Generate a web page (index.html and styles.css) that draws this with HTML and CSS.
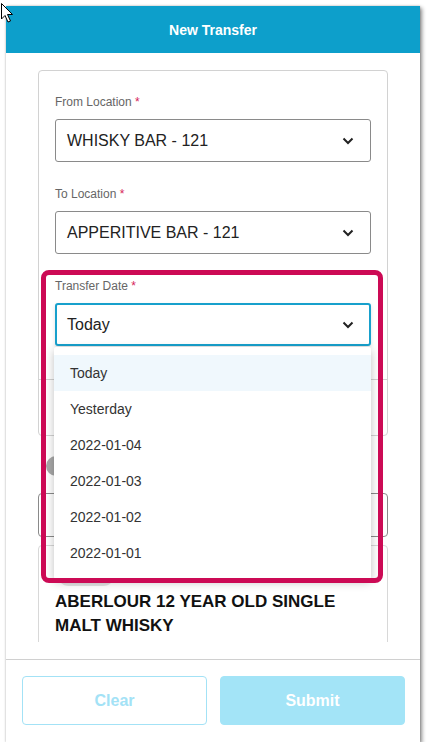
FILE: index.html
```html
<!DOCTYPE html>
<html lang="en">
<head>
    <meta charset="UTF-8">
    <meta name="viewport" content="width=device-width, initial-scale=1.0">
    <title>New Transfer</title>
    <link rel="stylesheet" href="styles.css">
</head>
<body>
    <div class="modal">
        <header class="modal-header">New Transfer</header>

        <div class="modal-body">
            <div class="form-card">
                <div class="card-fields">
                    <div class="field">
                        <label>From Location <span class="req">*</span></label>
                        <div class="select">
                            <span>WHISKY BAR - 121</span>
                            <svg class="chevron" width="12" height="8" viewBox="0 0 12 8"><path d="M1.5 1.5 L6 6 L10.5 1.5" fill="none" stroke="#222" stroke-width="2"/></svg>
                        </div>
                    </div>

                    <div class="field">
                        <label>To Location <span class="req">*</span></label>
                        <div class="select">
                            <span>APPERITIVE BAR - 121</span>
                            <svg class="chevron" width="12" height="8" viewBox="0 0 12 8"><path d="M1.5 1.5 L6 6 L10.5 1.5" fill="none" stroke="#222" stroke-width="2"/></svg>
                        </div>
                    </div>

                    <div class="field">
                        <label>Transfer Date <span class="req">*</span></label>
                        <div class="select-wrap">
                            <div class="select focused">
                                <span>Today</span>
                                <svg class="chevron" width="12" height="8" viewBox="0 0 12 8"><path d="M1.5 1.5 L6 6 L10.5 1.5" fill="none" stroke="#222" stroke-width="2"/></svg>
                            </div>
                            <ul class="dropdown">
                                <li class="active">Today</li>
                                <li>Yesterday</li>
                                <li>2022-01-04</li>
                                <li>2022-01-03</li>
                                <li>2022-01-02</li>
                                <li>2022-01-01</li>
                            </ul>
                        </div>
                    </div>
                </div>
                <div class="card-extra"></div>
            </div>

            <div class="toggle-row">
                <span class="toggle-knob"></span>
            </div>

            <div class="search-box"></div>

            <div class="product-card">
                <span class="badge"></span>
                <h3>ABERLOUR 12 YEAR OLD SINGLE MALT WHISKY</h3>
            </div>
        </div>

        <footer class="modal-footer">
            <button class="btn btn-outline">Clear</button>
            <button class="btn btn-solid">Submit</button>
        </footer>

        <div class="highlight"></div>
    </div>

    <svg class="cursor" width="14" height="22" viewBox="0 0 14 22">
        <path d="M1.5 1.5 L1.5 17 L5 13.5 L8 20 L10.5 19 L7.5 12.5 L12.5 12.5 Z" fill="#fff" stroke="#000" stroke-width="1"/>
    </svg>
</body>
</html>
```

FILE: styles.css
```css
body {
    margin: 0;
    background-color: #fff;
    font-family: "Liberation Sans", Arial, sans-serif;
}
.modal {
    position: relative;
    width: 414px;
    height: 736px;
    margin: 6px 0 0 6px;
    display: flex;
    flex-direction: column;
    background-color: #fff;
    box-shadow: 2px 2px 4px rgba(0, 0, 0, 0.45), 0 0 2px rgba(0, 0, 0, 0.2);
}
.modal-header {
    height: 47px;
    flex-shrink: 0;
    display: flex;
    align-items: center;
    justify-content: center;
    background-color: #0d9fcb;
    color: #fff;
    font-weight: bold;
    font-size: 14px;
}
.modal-body {
    height: 572px;
    padding: 17px 32px 0;
    overflow: hidden;
    flex-shrink: 0;
}
.form-card {
    border: 1px solid #d2d2d2;
    border-radius: 4px;
}
.card-fields {
    padding: 23px 16px 33px;
    display: flex;
    flex-direction: column;
    gap: 24px;
}
.field label {
    display: block;
    font-size: 12px;
    line-height: 16px;
    color: #666;
    margin-bottom: 9px;
}
.req {
    color: #d6245a;
}
.select-wrap {
    position: relative;
}
.select {
    height: 43px;
    box-sizing: border-box;
    border: 1px solid #8a8a8a;
    border-radius: 3px;
    padding: 0 16px 0 11px;
    display: flex;
    align-items: center;
    justify-content: space-between;
    font-size: 16px;
    color: #222;
}
.select.focused {
    border: 2px solid #17a0cc;
    padding: 0 15px 0 10px;
    box-shadow: 0 2px 4px rgba(0, 0, 0, 0.12);
}
.dropdown {
    position: absolute;
    top: 44px;
    left: -1px;
    right: 0;
    margin: 0;
    padding: 8px 0;
    list-style: none;
    background-color: #fff;
    box-shadow: 0 3px 10px rgba(0, 0, 0, 0.25);
    border-radius: 2px;
    z-index: 2;
}
.dropdown li {
    height: 36px;
    display: flex;
    align-items: center;
    padding-left: 16px;
    font-size: 14px;
    color: #333;
}
.dropdown li.active {
    background-color: #f0f8fd;
}
.card-extra {
    height: 55px;
    border-top: 1px solid #d2d2d2;
}
.toggle-row {
    margin-top: 20px;
    height: 20px;
}
.toggle-knob {
    display: block;
    width: 20px;
    height: 20px;
    margin-left: 8px;
    border-radius: 50%;
    background-color: #a8a8a8;
}
.search-box {
    margin-top: 17px;
    height: 44px;
    box-sizing: border-box;
    border: 1px solid #8a8a8a;
    border-radius: 4px;
}
.product-card {
    margin-top: 8px;
    border: 1px solid #d8d8d8;
    border-radius: 4px;
    padding: 16px 16px 20px;
}
.badge {
    display: block;
    width: 58px;
    height: 24px;
    margin-left: 2px;
    border-radius: 12px;
    background-color: #e2e2e2;
}
.product-card h3 {
    margin: 4px 0 0;
    font-size: 17px;
    line-height: 24px;
    color: #111;
}
.modal-footer {
    margin-top: 17px;
    border-top: 1px solid #d0d0d0;
    padding: 16px 15px 17px 16px;
    display: grid;
    grid-template-columns: 1fr 1fr;
    gap: 13px;
}
.btn {
    height: 49px;
    border-radius: 4px;
    font-family: "Liberation Sans", Arial, sans-serif;
    font-weight: bold;
    font-size: 16px;
}
.btn-outline {
    background-color: #fff;
    border: 1px solid #a3e2f6;
    color: #a3e2f6;
}
.btn-solid {
    background-color: #a3e4f7;
    border: 1px solid #a3e4f7;
    color: #fff;
}
.highlight {
    position: absolute;
    left: 35px;
    top: 264px;
    width: 342px;
    height: 313px;
    box-sizing: border-box;
    border: 5px solid #cc0a55;
    border-radius: 8px;
    z-index: 3;
}
.cursor {
    position: absolute;
    left: 0;
    top: 2px;
    z-index: 5;
}
```
